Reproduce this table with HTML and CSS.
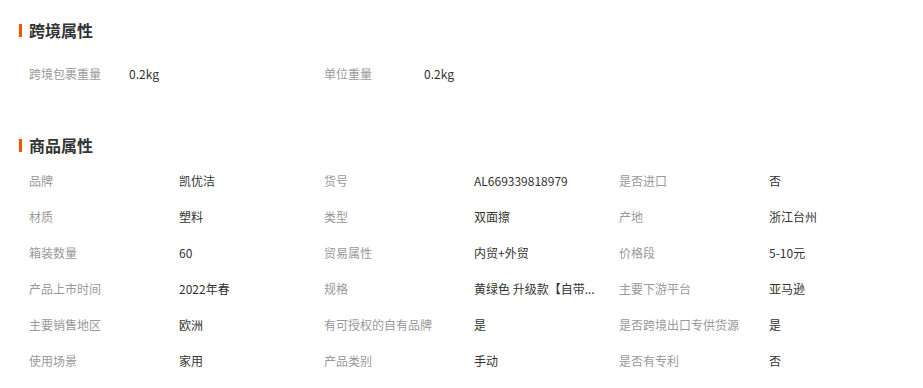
FILE: index.html
```html
<!DOCTYPE html>
<html lang="zh-CN">
<head>
<meta charset="utf-8">
<title>属性</title>
<link rel="stylesheet" href="styles.css">
</head>
<body>
<section class="section section-cross">
  <h2 class="title">跨境属性</h2>
  <div class="grid grid-cross">
    <div class="item"><span class="label">跨境包裹重量</span><span class="value">0.2kg</span></div>
    <div class="item"><span class="label">单位重量</span><span class="value">0.2kg</span></div>
  </div>
</section>
<section class="section section-goods">
  <h2 class="title">商品属性</h2>
  <div class="grid grid-goods">
    <div class="item"><span class="label">品牌</span><span class="value">凯优洁</span></div>
    <div class="item"><span class="label">货号</span><span class="value">AL669339818979</span></div>
    <div class="item"><span class="label">是否进口</span><span class="value">否</span></div>
    <div class="item"><span class="label">材质</span><span class="value">塑料</span></div>
    <div class="item"><span class="label">类型</span><span class="value">双面擦</span></div>
    <div class="item"><span class="label">产地</span><span class="value">浙江台州</span></div>
    <div class="item"><span class="label">箱装数量</span><span class="value">60</span></div>
    <div class="item"><span class="label">贸易属性</span><span class="value">内贸+外贸</span></div>
    <div class="item"><span class="label">价格段</span><span class="value">5-10元</span></div>
    <div class="item"><span class="label">产品上市时间</span><span class="value">2022年春</span></div>
    <div class="item"><span class="label">规格</span><span class="value value-clip" title="黄绿色 升级款【自带刮条】">黄绿色 升级款【自带...</span></div>
    <div class="item"><span class="label">主要下游平台</span><span class="value">亚马逊</span></div>
    <div class="item"><span class="label">主要销售地区</span><span class="value">欧洲</span></div>
    <div class="item"><span class="label">有可授权的自有品牌</span><span class="value">是</span></div>
    <div class="item"><span class="label">是否跨境出口专供货源</span><span class="value">是</span></div>
    <div class="item"><span class="label">使用场景</span><span class="value">家用</span></div>
    <div class="item"><span class="label">产品类别</span><span class="value">手动</span></div>
    <div class="item"><span class="label">是否有专利</span><span class="value">否</span></div>
  </div>
</section>
</body>
</html>
```
FILE: styles.css
```css
html, body {
  margin: 0;
  padding: 0;
  background: #fff;
}
body {
  font-family: "Noto Sans CJK SC", "Microsoft YaHei", sans-serif;
  font-size: 12px;
  color: #333;
}
.section {
  padding-left: 19px;
}
.section-cross {
  padding-top: 15px;
  padding-bottom: 39px;
}
.title {
  margin: 0;
  height: 30px;
  line-height: 30px;
  font-size: 16px;
  font-weight: bold;
  color: #333;
  display: flex;
  align-items: center;
}
.title::before {
  content: "";
  display: block;
  width: 3px;
  height: 13px;
  background: #ff5000;
  margin-right: 7px;
}
.grid {
  display: grid;
  padding-left: 10px;
}
.grid-cross {
  margin-top: 10px;
  grid-template-columns: repeat(2, 295px);
}
.grid-cross .label {
  width: 100px;
}
.grid-goods {
  margin-top: 2px;
  grid-template-columns: repeat(3, 295px);
}
.grid-goods .label {
  width: 150px;
}
.item {
  display: flex;
  align-items: center;
  height: 36px;
}
.label {
  flex: none;
  color: #999;
  white-space: nowrap;
}
.value {
  color: #333;
  white-space: nowrap;
}
```
